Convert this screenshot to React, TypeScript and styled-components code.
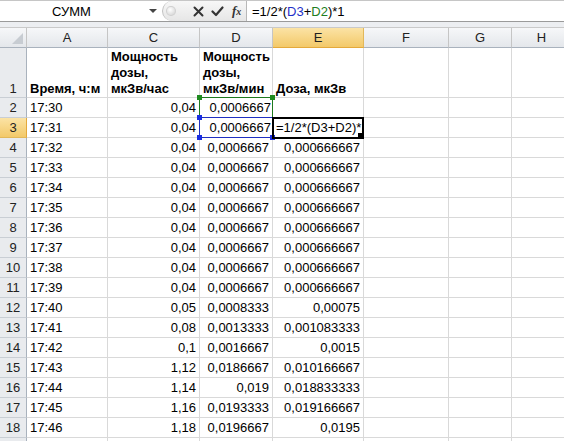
import React from "react";
import styled, { createGlobalStyle, css } from "styled-components";

const Global = createGlobalStyle`
  html, body { margin: 0; padding: 0; background: #fff; }
  body { font-family: "Liberation Sans", Arial, sans-serif; overflow: hidden; }
`;

const Page = styled.div`
  width: 564px;
  height: 441px;
  overflow: hidden;
  display: flex;
  flex-direction: column;
  background: #fff;
`;

const FormulaBar = styled.div`
  height: 22px;
  flex-shrink: 0;
  box-sizing: border-box;
  border-top: 1px solid #c6c6c6;
  border-bottom: 1px solid #9a9a9a;
  display: flex;
  align-items: stretch;
  background: #fff;
`;

const NameBox = styled.div`
  width: 162px;
  flex-shrink: 0;
  position: relative;
  display: flex;
  align-items: center;
  padding-left: 52px;
  box-sizing: border-box;
  font-size: 13px;
  color: #000;
`;

const DropArrow = styled.div`
  position: absolute;
  left: 149px;
  top: 8px;
  width: 0;
  height: 0;
  border-left: 4px solid transparent;
  border-right: 4px solid transparent;
  border-top: 4px solid #444;
`;

const Pill = styled.div`
  width: 85px;
  flex-shrink: 0;
  display: flex;
  align-items: center;
  background: linear-gradient(#f7f7f7, #e6e6e6);
  border-left: 1px solid #c0c0c0;
  border-right: 1px solid #b8b8b8;
  border-radius: 10px 0 0 10px;
  box-sizing: border-box;
`;

const Knob = styled.div`
  width: 8px;
  height: 8px;
  margin-left: 3px;
  margin-right: 14px;
  border-radius: 50%;
  background: radial-gradient(circle at 40% 35%, #fff, #cfcfcf);
  border: 1px solid #d0d0d0;
`;

const IconSlot = styled.div`
  width: 20px;
  display: flex;
  align-items: center;
  justify-content: center;
`;

const Fx = styled.span`
  font-family: "Liberation Serif", "Times New Roman", serif;
  font-style: italic;
  font-weight: bold;
  font-size: 13px;
  color: #333;
  span { font-size: 10px; }
`;

const FormulaText = styled.div`
  flex: 1;
  display: flex;
  align-items: center;
  padding-left: 5px;
  font-size: 13px;
  color: #000;
  white-space: pre;
`;

const Ref = styled.span<{ $c: string }>`
  color: ${(p) => p.$c};
`;

const Band = styled.div`
  height: 5px;
  flex-shrink: 0;
  background: #eceef1;
  border-bottom: 1px solid #c9c9c9;
`;

const cols = "27px 81px 92px 73px 91px 85px 63px 60px";

const Grid = styled.div<{ $first?: string }>`
  display: grid;
  grid-template-columns: ${cols};
  grid-template-rows: ${(p) => p.$first || "20px"};
  grid-auto-rows: 20px;
  position: relative;
  flex-shrink: 0;
`;

const headBase = css`
  box-sizing: border-box;
  display: flex;
  align-items: center;
  justify-content: center;
  font-size: 13px;
  color: #222;
  border-right: 1px solid #c5c5c5;
  border-bottom: 1px solid #a9b2bd;
`;

const ColHead = styled.div<{ $active?: boolean }>`
  ${headBase};
  background: ${(p) =>
    p.$active
      ? "linear-gradient(#fbe3a5, #f3c969)"
      : "linear-gradient(#f6f7f9, #e4e7eb)"};
  ${(p) => p.$active && "border-bottom: 1px solid #e4a93b; border-right: 1px solid #e2b85a;"}
`;

const Corner = styled.div`
  ${headBase};
  background: linear-gradient(#f6f7f9, #e4e7eb);
  position: relative;
  &::after {
    content: "";
    position: absolute;
    right: 3px;
    bottom: 3px;
    width: 0;
    height: 0;
    border-left: 11px solid transparent;
    border-bottom: 11px solid #c7ccd2;
  }
`;

const RowHead = styled.div<{ $active?: boolean; $tall?: boolean }>`
  ${headBase};
  align-items: ${(p) => (p.$tall ? "flex-end" : "center")};
  padding-bottom: ${(p) => (p.$tall ? "1px" : "0")};
  border-bottom: 1px solid #c9ced4;
  border-right: 1px solid #a9b2bd;
  background: ${(p) =>
    p.$active ? "linear-gradient(#fbe3a5, #f3c969)" : "#e9ebee"};
  ${(p) => p.$active && "border-right: 1px solid #e4a93b; border-bottom: 1px solid #e2b85a;"}
`;

const Cell = styled.div<{ $align?: "left" | "right"; $bold?: boolean; $tall?: boolean }>`
  box-sizing: border-box;
  border-right: 1px solid #d9d9d9;
  border-bottom: 1px solid #d9d9d9;
  font-size: 13px;
  color: #000;
  display: flex;
  flex-direction: ${(p) => (p.$tall ? "column" : "row")};
  align-items: ${(p) => (p.$tall ? "flex-start" : "center")};
  justify-content: ${(p) => (p.$tall ? "flex-end" : p.$align === "right" ? "flex-end" : "flex-start")};
  padding: 0 3px;
  font-weight: ${(p) => (p.$bold ? "bold" : "normal")};
  white-space: nowrap;
  line-height: 16px;
  position: relative;
`;

const Marked = styled(Cell)<{ $color: string }>`
  border: none;
  box-shadow: inset 0 0 0 1px ${(p) => p.$color};
  margin: -1px 0 0 -1px;
  padding-right: 2px;
  z-index: 2;
  width: calc(100% + 1px);
  height: calc(100% + 1px);
`;

const Handle = styled.div<{ $color: string; $x: "l" | "r"; $y: "t" | "b" }>`
  position: absolute;
  width: 5px;
  height: 5px;
  background: ${(p) => p.$color};
  ${(p) => (p.$x === "l" ? "left: -2px;" : "right: -2px;")}
  ${(p) => (p.$y === "t" ? "top: -2px;" : "bottom: -2px;")}
  z-index: 4;
`;

const EditCell = styled(Cell)`
  border: 2px solid #000;
  margin: -1px 0 0 -1px;
  width: calc(100% + 1px);
  height: calc(100% + 2px);
  padding: 0 0 0 2px;
  overflow: hidden;
  z-index: 3;
  &::before {
    content: "";
    position: absolute;
    left: -2px;
    top: -1px;
    bottom: -1px;
    width: 2px;
    background: #f5e56a;
  }
`;

const FillHandle = styled.div`
  position: absolute;
  right: -3px;
  bottom: -3px;
  width: 6px;
  height: 6px;
  background: #000;
  border: 1px solid #fff;
  z-index: 5;
`;

const Line = styled.span`
  display: block;
`;

type Row = [string, string, string, string];

const rows: Row[] = [
  ["17:30", "0,04", "0,0006667", ""],
  ["17:31", "0,04", "0,0006667", "EDIT"],
  ["17:32", "0,04", "0,0006667", "0,000666667"],
  ["17:33", "0,04", "0,0006667", "0,000666667"],
  ["17:34", "0,04", "0,0006667", "0,000666667"],
  ["17:35", "0,04", "0,0006667", "0,000666667"],
  ["17:36", "0,04", "0,0006667", "0,000666667"],
  ["17:37", "0,04", "0,0006667", "0,000666667"],
  ["17:38", "0,04", "0,0006667", "0,000666667"],
  ["17:39", "0,04", "0,0006667", "0,000666667"],
  ["17:40", "0,05", "0,0008333", "0,00075"],
  ["17:41", "0,08", "0,0013333", "0,001083333"],
  ["17:42", "0,1", "0,0016667", "0,0015"],
  ["17:43", "1,12", "0,0186667", "0,010166667"],
  ["17:44", "1,14", "0,019", "0,018833333"],
  ["17:45", "1,16", "0,0193333", "0,019166667"],
  ["17:46", "1,18", "0,0196667", "0,0195"],
];

const headers: string[][] = [
  ["Время, ч:м"],
  ["Мощность", "дозы,", "мкЗв/час"],
  ["Мощность", "дозы,", "мкЗв/мин"],
  ["Доза, мкЗв"],
];

export default function App() {
  return (
    <Page>
      <Global />
      <FormulaBar>
        <NameBox>
          СУММ
          <DropArrow />
        </NameBox>
        <Pill>
          <Knob />
          <IconSlot>
            <svg width="11" height="11" viewBox="0 0 11 11">
              <path d="M1.5 1.5 L9.5 9.5 M9.5 1.5 L1.5 9.5" stroke="#333" strokeWidth="2" strokeLinecap="round" />
            </svg>
          </IconSlot>
          <IconSlot>
            <svg width="13" height="11" viewBox="0 0 13 11">
              <path d="M1.5 5.5 L5 9 L11.5 1.5" stroke="#333" strokeWidth="2.2" fill="none" strokeLinecap="round" strokeLinejoin="round" />
            </svg>
          </IconSlot>
          <IconSlot>
            <Fx>
              f<span>x</span>
            </Fx>
          </IconSlot>
        </Pill>
        <FormulaText>
          =1/2*(<Ref $c="#1f31c8">D3</Ref>+<Ref $c="#1d7d22">D2</Ref>)*1
        </FormulaText>
      </FormulaBar>
      <Band />
      <Grid>
        <Corner />
        <ColHead>A</ColHead>
        <ColHead>C</ColHead>
        <ColHead>D</ColHead>
        <ColHead $active>E</ColHead>
        <ColHead>F</ColHead>
        <ColHead>G</ColHead>
        <ColHead>H</ColHead>
      </Grid>
      <Grid $first="50px">
        <RowHead $tall>1</RowHead>
        {headers.map((h, i) => (
          <Cell key={i} $bold $tall>
            {h.map((l) => (
              <Line key={l}>{l}</Line>
            ))}
          </Cell>
        ))}
        <Cell />
        <Cell />
        <Cell />
        {rows.map((r, i) => {
          const n = i + 2;
          return (
            <React.Fragment key={n}>
              <RowHead $active={n === 3}>{n}</RowHead>
              <Cell>{r[0]}</Cell>
              <Cell $align="right">{r[1]}</Cell>
              {n === 2 ? (
                <Marked $align="right" $color="#1e7a1e">
                  {r[2]}
                  <Handle $color="#1e8a1e" $x="l" $y="t" />
                  <Handle $color="#1e8a1e" $x="r" $y="t" />
                </Marked>
              ) : n === 3 ? (
                <Marked $align="right" $color="#2030c0">
                  {r[2]}
                  <Handle $color="#1a2ee0" $x="l" $y="t" />
                  <Handle $color="#1a2ee0" $x="l" $y="b" />
                  <Handle $color="#1a2ee0" $x="r" $y="b" />
                </Marked>
              ) : (
                <Cell $align="right">{r[2]}</Cell>
              )}
              {r[3] === "EDIT" ? (
                <EditCell>
                  =1/2*(D3+D2)*1
                  <FillHandle />
                </EditCell>
              ) : (
                <Cell $align="right">{r[3]}</Cell>
              )}
              <Cell />
              <Cell />
              <Cell />
            </React.Fragment>
          );
        })}
        <RowHead />
        <Cell />
        <Cell />
        <Cell />
        <Cell />
        <Cell />
        <Cell />
        <Cell />
      </Grid>
    </Page>
  );
}
